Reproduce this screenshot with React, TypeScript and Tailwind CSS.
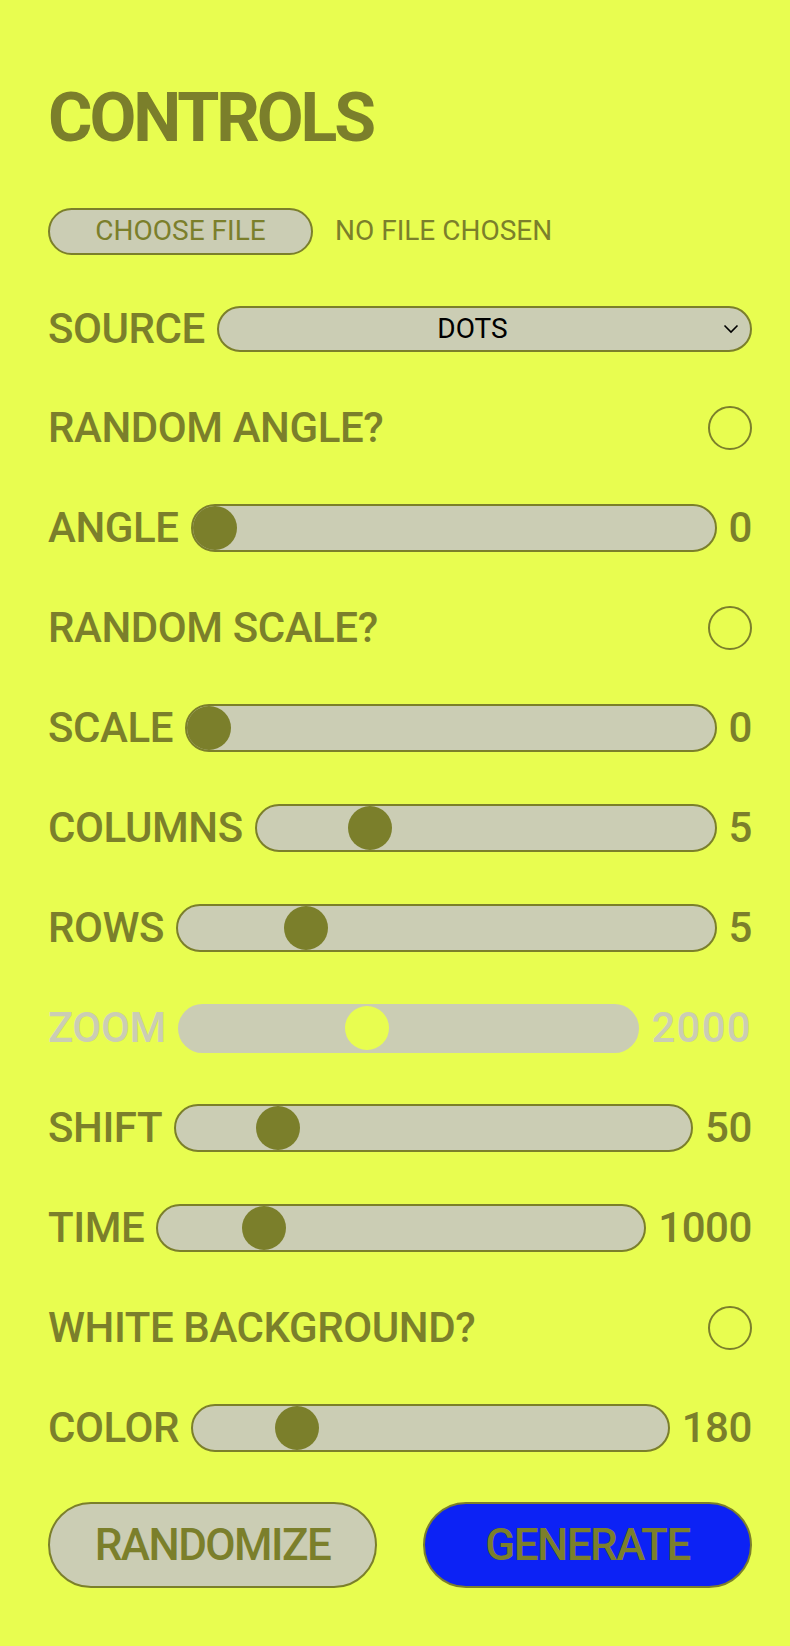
import React from 'react';

const font = { fontFamily: 'Roboto, "Liberation Sans", sans-serif' };

function Slider({
  label,
  value,
  pos,
  disabled = false,
}: {
  label: string;
  value: string;
  pos: number;
  disabled?: boolean;
}) {
  return (
    <div className="h-[100px] flex items-center gap-3">
      <span className={disabled ? 'text-[#cbcdb4]' : 'text-[#7b7f2b]'}>{label}</span>
      {disabled ? (
        <div className="relative flex-1 h-[49px] rounded-full bg-[#cbcdb4]">
          <div
            className="absolute top-[2px] w-[44px] h-[44px] rounded-full bg-[#e8fd50]"
            style={{ left: `calc(${pos} * (100% - 48px) + 2px)` }}
          />
        </div>
      ) : (
        <div className="relative flex-1 h-[48px] rounded-full bg-[#cbcdb4] border-2 border-[#7b7f2b]">
          <div
            className="absolute top-0 w-[44px] h-[44px] rounded-full bg-[#7b7f2b]"
            style={{ left: `calc(${pos} * (100% - 44px))` }}
          />
        </div>
      )}
      <span
        className={disabled ? 'text-[#cbcdb4] tracking-[0.03em]' : 'text-[#7b7f2b]'}>
        {value}
      </span>
    </div>
  );
}

function Toggle({ label }: { label: string }) {
  return (
    <div className="h-[100px] flex items-center justify-between">
      <span>{label}</span>
      <div className="w-[44px] h-[44px] rounded-full border-2 border-[#7b7f2b]" />
    </div>
  );
}

export default function App() {
  return (
    <div
      className="min-h-[1646px] w-[790px] bg-[#e8fd50] text-[#7b7f2b] pl-12 pr-[38px] pt-[68px] text-[42px] font-medium leading-none tracking-[-0.01em]"
      style={font}>
      {/* Title */}
      <div className="h-[100px] flex items-center">
        <h1 className="text-[68px] font-bold tracking-[-0.045em]">CONTROLS</h1>
      </div>

      {/* File input */}
      <div className="mt-[14px] h-[98px] flex items-center gap-[22px] text-[28px] font-normal tracking-normal">
        <button className="w-[265px] h-[47px] rounded-full border-2 border-[#7b7f2b] bg-[#cbcdb4] text-[#7b7f2b]">
          CHOOSE FILE
        </button>
        <span>NO FILE CHOSEN</span>
      </div>

      {/* Source */}
      <div className="h-[98px] flex items-center gap-3">
        <span>SOURCE</span>
        <div className="relative flex-1 h-[46px] rounded-full border-2 border-[#7b7f2b] bg-[#cbcdb4] flex items-center justify-center pr-[24px]">
          <span className="text-black text-[28px] font-normal tracking-normal">DOTS</span>
          <svg
            className="absolute right-[11px] top-[16px]"
            width="16"
            height="10"
            viewBox="0 0 16 10"
            fill="none">
            <path d="M1.5 1.5 L8 8 L14.5 1.5" stroke="#000" strokeWidth="1.6" />
          </svg>
        </div>
      </div>

      <Toggle label="RANDOM ANGLE?" />
      <Slider label="ANGLE" value="0" pos={0} />
      <Toggle label="RANDOM SCALE?" />
      <Slider label="SCALE" value="0" pos={0} />
      <Slider label="COLUMNS" value="5" pos={0.22} />
      <Slider label="ROWS" value="5" pos={0.216} />
      <Slider label="ZOOM" value="2000" pos={0.4} disabled />
      <Slider label="SHIFT" value="50" pos={0.17} />
      <Slider label="TIME" value="1000" pos={0.19} />
      <Toggle label="WHITE BACKGROUND?" />
      <Slider label="COLOR" value="180" pos={0.19} />

      {/* Actions */}
      <div className="mt-[24px] flex gap-[46px]">
        <button className="flex-1 h-[86px] rounded-full border-2 border-[#7b7f2b] bg-[#cbcdb4] text-[#7b7f2b] text-[44px] font-medium tracking-[-0.035em]">
          RANDOMIZE
        </button>
        <button className="flex-1 h-[86px] rounded-full border-2 border-[#7b7f2b] bg-[#0c22f5] text-[#7b7f2b] text-[44px] font-medium tracking-[-0.035em]">
          GENERATE
        </button>
      </div>
    </div>
  );
}
